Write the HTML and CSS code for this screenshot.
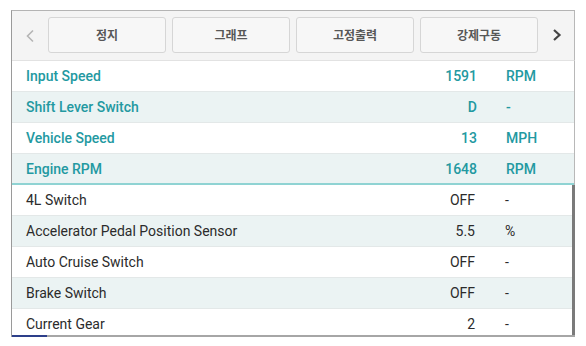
FILE: index.html
```html
<!DOCTYPE html>
<html>
<head>
<meta charset="utf-8">
<link rel="stylesheet" href="styles.css">
</head>
<body>
<div class="frame">
  <div class="toolbar">
    <div class="nav nav-prev">
      <svg width="10" height="14" viewBox="0 0 10 14"><path d="M8 1.5 L2.5 7 L8 12.5" fill="none" stroke="#b5b5b5" stroke-width="1.6"/></svg>
    </div>
    <div class="btns">
      <div class="btn">정지</div>
      <div class="btn">그래프</div>
      <div class="btn">고정출력</div>
      <div class="btn">강제구동</div>
    </div>
    <div class="nav nav-next">
      <svg width="10" height="14" viewBox="0 0 10 14"><path d="M2 2 L7.5 7 L2 12" fill="none" stroke="#444" stroke-width="2.2"/></svg>
    </div>
  </div>
  <div class="fixed">
    <div class="row teal"><span class="label">Input Speed</span><span class="val">1591</span><span class="unit">RPM</span></div>
    <div class="row teal alt"><span class="label">Shift Lever Switch</span><span class="val">D</span><span class="unit">-</span></div>
    <div class="row teal"><span class="label">Vehicle Speed</span><span class="val">13</span><span class="unit">MPH</span></div>
    <div class="row teal alt last"><span class="label">Engine RPM</span><span class="val">1648</span><span class="unit">RPM</span></div>
  </div>
  <div class="scroll">
    <div class="list">
      <div class="row"><span class="label">4L Switch</span><span class="val">OFF</span><span class="unit">-</span></div>
      <div class="row alt"><span class="label">Accelerator Pedal Position Sensor</span><span class="val">5.5</span><span class="unit">%</span></div>
      <div class="row"><span class="label">Auto Cruise Switch</span><span class="val">OFF</span><span class="unit">-</span></div>
      <div class="row alt"><span class="label">Brake Switch</span><span class="val">OFF</span><span class="unit">-</span></div>
      <div class="row"><span class="label">Current Gear</span><span class="val">2</span><span class="unit">-</span></div>
    </div>
    <div class="scrollbar"></div>
  </div>
  <div class="bottom"><span class="bottom-mark"></span><span class="bottom-rest"></span></div>
</div>
</body>
</html>
```

FILE: styles.css
```css
* { box-sizing: border-box; }
body {
  margin: 0;
  background: #ffffff;
  font-family: Roboto, "Liberation Sans", "Noto Sans CJK KR", sans-serif;
}
.frame {
  margin: 10px 0 0 11px;
  width: 564px;
  height: 327px;
  border-top: 1px solid #b4b4b4;
  border-left: 1px solid #9a9a9a;
  display: flex;
  flex-direction: column;
}
.toolbar {
  height: 50px;
  flex: none;
  background: #f4f4f4;
  border-bottom: 1px solid #e2e2e2;
  border-right: 1px solid #b8b8b8;
  display: flex;
  align-items: center;
  padding-bottom: 2px;
}
.nav {
  display: flex;
  align-items: center;
  justify-content: center;
}
.nav-prev { width: 36px; padding-top: 2px; }
.nav-next { width: 35px; padding-left: 2px; padding-top: 1px; }
.btns {
  display: flex;
  gap: 6px;
}
.btn {
  width: 118px;
  height: 36px;
  background: #f7f7f7;
  border: 1px solid #d6d6d6;
  border-radius: 3px;
  display: flex;
  align-items: center;
  justify-content: center;
  font-family: "Noto Sans CJK KR", sans-serif;
  font-size: 12px;
  font-weight: 700;
  color: #575757;
}
.fixed {
  flex: none;
  border-right: 1px solid #b8b8b8;
}
.row {
  height: 31px;
  display: grid;
  grid-template-columns: 1fr 60px 68px;
  column-gap: 29px;
  align-items: center;
  padding-left: 14px;
  font-size: 14px;
  color: #2b2b2b;
  background: #ffffff;
  border-bottom: 1px solid #e3e8e8;
}
.row.alt { background: #ebf3f3; }
.row.teal { color: #2399a1; font-weight: 500; }
.row.last { border-bottom: 2px solid #8fd3d3; }
.val { text-align: right; }
.scroll {
  flex: 1;
  display: flex;
  overflow: hidden;
}
.list {
  flex: 1;
  overflow: hidden;
}
.list .unit { padding-left: 1px; }
.scrollbar {
  width: 3px;
  flex: none;
  background: #7a7a7a;
}
.bottom {
  height: 2px;
  flex: none;
  display: flex;
}
.bottom-mark { width: 35px; background: #2d3f8a; }
.bottom-rest { flex: 1; background: #a6a6a6; }
```
